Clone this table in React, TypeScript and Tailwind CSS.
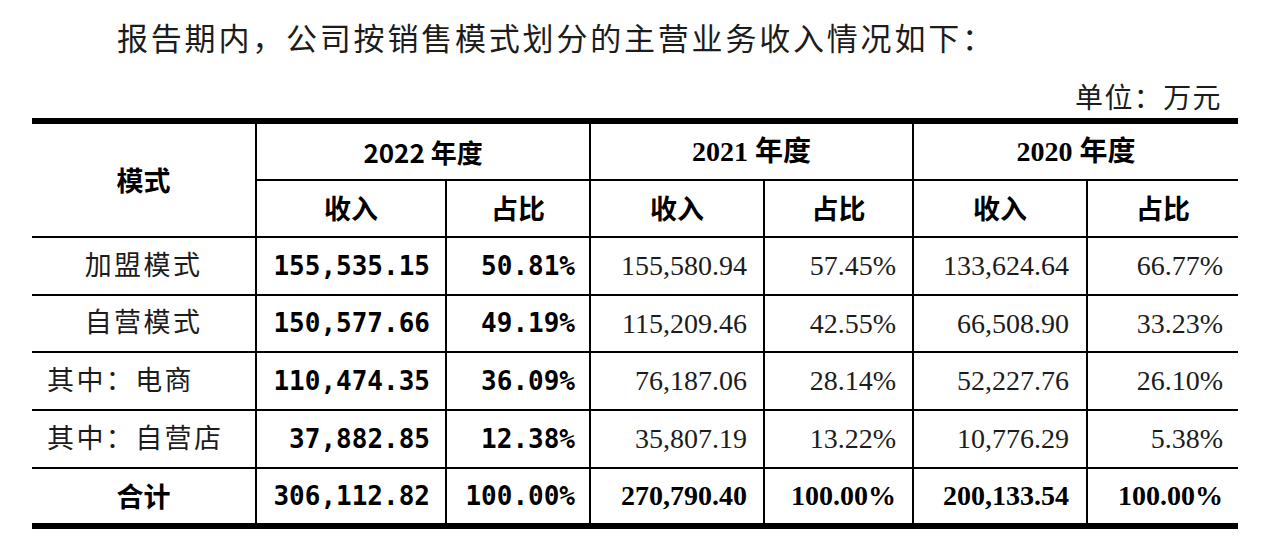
const serif = "font-['Liberation_Serif','Noto_Sans_CJK_SC',serif]"
const hei = "font-['Noto_Sans_CJK_SC',sans-serif]"
const mono = "font-['DejaVu_Sans_Mono','Noto_Sans_CJK_SC',monospace]"

const rows = [
  { label: '加盟模式', left: false, h: 'h-[58px]', a: '155,535.15', ap: '50.81%', b: '155,580.94', bp: '57.45%', c: '133,624.64', cp: '66.77%' },
  { label: '自营模式', left: false, h: 'h-[57px]', a: '150,577.66', ap: '49.19%', b: '115,209.46', bp: '42.55%', c: '66,508.90', cp: '33.23%' },
  { label: '其中：电商', left: true, h: 'h-[58px]', a: '110,474.35', ap: '36.09%', b: '76,187.06', bp: '28.14%', c: '52,227.76', cp: '26.10%' },
  { label: '其中：自营店', left: true, h: 'h-[58px]', a: '37,882.85', ap: '12.38%', b: '35,807.19', bp: '13.22%', c: '10,776.29', cp: '5.38%' },
]

const cell = 'border-2 border-black align-middle p-0'

export default function App() {
  return (
    <div className="w-[1280px] h-[555px] bg-white text-black overflow-hidden">
      {/* Intro line */}
      <p className={`${serif} pt-[18px] pl-[117px] h-[62px] text-[31px] leading-[44px] tracking-[2.8px] text-[#1c1c1c]`}>
        报告期内，公司按销售模式划分的主营业务收入情况如下：
      </p>
      <p className={`${serif} mt-[18px] h-[38px] pr-[58px] text-right text-[28px] leading-[38px] tracking-[1.4px] text-[#1c1c1c]`}>
        单位：万元
      </p>

      <table className="ml-[32px] w-[1206px] table-fixed border-collapse border-t-[6px] border-b-[6px] border-black">
        <colgroup>
          <col className="w-[224px]" />
          <col className="w-[190px]" />
          <col className="w-[144px]" />
          <col className="w-[174px]" />
          <col className="w-[149px]" />
          <col className="w-[174px]" />
          <col className="w-[151px]" />
        </colgroup>
        <thead>
          <tr className="h-[59px]">
            <th rowSpan={2} className={`${cell} border-l-0 ${hei} text-[27px] font-bold`}>
              模式
            </th>
            <th colSpan={2} className={`${cell} ${hei} text-[26px] font-bold`}>
              2022 年度
            </th>
            <th colSpan={2} className={`${cell} ${serif} text-[28px] font-bold`}>
              2021 年度
            </th>
            <th colSpan={2} className={`${cell} border-r-0 ${serif} text-[28px] font-bold`}>
              2020 年度
            </th>
          </tr>
          <tr className="h-[57px]">
            {['收入', '占比', '收入', '占比', '收入', '占比'].map((h, i) => (
              <th
                key={i}
                className={`${cell} ${i === 5 ? 'border-r-0' : ''} ${hei} text-[27px] font-bold`}
              >
                {h}
              </th>
            ))}
          </tr>
        </thead>
        <tbody>
          {rows.map((r) => (
            <tr key={r.label} className={r.h}>
              <td
                className={`${cell} border-l-0 ${serif} text-[27px] tracking-[2.4px] text-[#1c1c1c] ${
                  r.left ? 'text-left pl-[15px]' : 'text-center'
                }`}
              >
                {r.label}
              </td>
              <td className={`${cell} ${mono} text-[26px] font-bold text-right pr-[15px]`}>{r.a}</td>
              <td className={`${cell} ${mono} text-[26px] font-bold text-right pr-[14px]`}>{r.ap}</td>
              <td className={`${cell} ${serif} text-[28px] text-right pr-[16px] text-[#1c1c1c]`}>{r.b}</td>
              <td className={`${cell} ${serif} text-[28px] text-right pr-[16px] text-[#1c1c1c]`}>{r.bp}</td>
              <td className={`${cell} ${serif} text-[28px] text-right pr-[17px] text-[#1c1c1c]`}>{r.c}</td>
              <td className={`${cell} border-r-0 ${serif} text-[28px] text-right pr-[15px] text-[#1c1c1c]`}>{r.cp}</td>
            </tr>
          ))}
          <tr className="h-[58px]">
            <td className={`${cell} border-l-0 ${hei} text-[27px] font-bold text-center`}>合计</td>
            <td className={`${cell} ${mono} text-[26px] font-bold text-right pr-[15px]`}>306,112.82</td>
            <td className={`${cell} ${mono} text-[26px] font-bold text-right pr-[14px]`}>100.00%</td>
            <td className={`${cell} ${serif} text-[28px] font-bold text-right pr-[16px]`}>270,790.40</td>
            <td className={`${cell} ${serif} text-[28px] font-bold text-right pr-[16px]`}>100.00%</td>
            <td className={`${cell} ${serif} text-[28px] font-bold text-right pr-[17px]`}>200,133.54</td>
            <td className={`${cell} border-r-0 ${serif} text-[28px] font-bold text-right pr-[15px]`}>100.00%</td>
          </tr>
        </tbody>
      </table>
    </div>
  )
}
